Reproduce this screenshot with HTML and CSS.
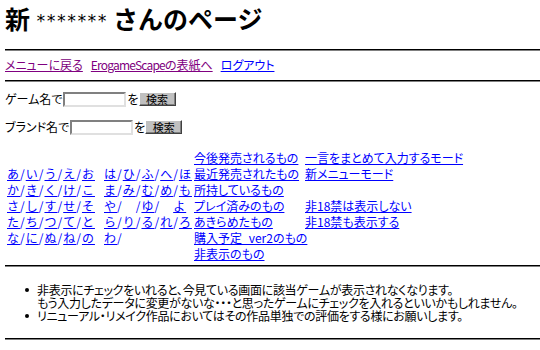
FILE: index.html
```html
<!DOCTYPE html>
<html lang="ja">
<head>
<meta charset="utf-8">
<title>新 ******* さんのページ</title>
<link rel="stylesheet" href="styles.css">
</head>
<body>
<h1 class="title">新 <span class="stars">*******</span> さんのページ</h1>
<hr class="rule rule-top">
<div class="nav">
  <a class="visited" href="#">メニューに戻る</a>
  <a class="visited" href="#"><span class="latin">ErogameScape</span>の表紙へ</a>
  <a href="#">ログアウト</a>
</div>
<hr class="rule rule-nav">
<form class="search">
  <div class="search-row">ゲーム名で<input class="field" type="text">を<button class="btn" type="button">検索</button></div>
  <div class="search-row">ブランド名で<input class="field" type="text">を<button class="btn" type="button">検索</button></div>
</form>
<div class="menu">
  <div class="kana">
    <div><a href="#">あ</a>/<a href="#">い</a>/<a href="#">う</a>/<a href="#">え</a>/<a href="#">お</a></div>
    <div><a href="#">か</a>/<a href="#">き</a>/<a href="#">く</a>/<a href="#">け</a>/<a href="#">こ</a></div>
    <div><a href="#">さ</a>/<a href="#">し</a>/<a href="#">す</a>/<a href="#">せ</a>/<a href="#">そ</a></div>
    <div><a href="#">た</a>/<a href="#">ち</a>/<a href="#">つ</a>/<a href="#">て</a>/<a href="#">と</a></div>
    <div><a href="#">な</a>/<a href="#">に</a>/<a href="#">ぬ</a>/<a href="#">ね</a>/<a href="#">の</a></div>
  </div>
  <div class="kana">
    <div><a href="#">は</a>/<a href="#">ひ</a>/<a href="#">ふ</a>/<a href="#">へ</a>/<a href="#">ほ</a></div>
    <div><a href="#">ま</a>/<a href="#">み</a>/<a href="#">む</a>/<a href="#">め</a>/<a href="#">も</a></div>
    <div><a href="#">や</a>/　/<a href="#">ゆ</a>/　<a href="#">よ</a></div>
    <div><a href="#">ら</a>/<a href="#">り</a>/<a href="#">る</a>/<a href="#">れ</a>/<a href="#">ろ</a></div>
    <div><a href="#">わ</a>/</div>
  </div>
  <div class="lists">
    <a href="#">今後発売されるもの</a>
    <a href="#">最近発売されたもの</a>
    <a href="#">所持しているもの</a>
    <a href="#">プレイ済みのもの</a>
    <a href="#">あきらめたもの</a>
    <a href="#">購入予定_ver2のもの</a>
    <a href="#">非表示のもの</a>
  </div>
  <div class="modes">
    <a href="#">一言をまとめて入力するモード</a>
    <a href="#">新メニューモード</a>
    <span class="blank"></span>
    <a href="#">非18禁は表示しない</a>
    <a href="#">非18禁も表示する</a>
  </div>
</div>
<hr class="rule rule-notes">
<ul class="notes">
  <li>非表示にチェックをいれると、今見ている画面に該当ゲームが表示されなくなります。<br>もう入力したデータに変更がないな・・・と思ったゲームにチェックを入れるといいかもしれません。</li>
  <li>リニューアル・リメイク作品においてはその作品単独での評価をする様にお願いします。</li>
</ul>
<hr class="rule rule-bottom">
</body>
</html>
```
FILE: styles.css
```css
html, body {
  background: #fff;
}
body {
  margin: 0;
  padding: 4px 0 0 5px;
  font-family: "Noto Sans CJK JP", sans-serif;
  font-size: 12px;
  line-height: 16px;
  color: #000;
  font-feature-settings: "palt";
}
a {
  color: #0000ff;
  text-decoration: underline;
}
a.visited {
  color: #800080;
}
.latin {
  letter-spacing: -0.8px;
}
.title {
  margin: 0;
  font-size: 25px;
  line-height: 28px;
  font-weight: bold;
  font-feature-settings: normal;
}
.stars {
  font-family: "DejaVu Sans Mono", monospace;
  font-weight: normal;
  font-size: 17px;
  vertical-align: 2px;
}
.rule {
  border: 0;
  border-top: 1px solid #000;
  border-bottom: 1px solid #808080;
  height: 0;
  margin: 0;
}
.rule-top { margin-top: 14px; }
.nav {
  margin: 6px 0;
  display: flex;
  gap: 8px;
}
.rule-nav { margin-top: 7px; }
.search {
  margin: 10px 0 0;
  display: flex;
  flex-direction: column;
  gap: 14px;
}
.search-row {
  display: flex;
  align-items: center;
  height: 14px;
}
.field {
  box-sizing: border-box;
  width: 63px;
  height: 15px;
  margin: 0 1px;
  padding: 0;
  border: 2px solid;
  border-color: #808080 #e0e0e0 #e0e0e0 #808080;
  background: #fff;
}
.btn {
  box-sizing: border-box;
  width: 37px;
  height: 14px;
  margin-left: 0;
  padding: 0;
  border: 1px solid;
  border-color: #fff #404040 #404040 #fff;
  box-shadow: inset -1px -1px 0 #808080;
  background: #c0c0c0;
  font: inherit;
  font-size: 11px;
  line-height: 12px;
  color: #000;
}
.menu {
  margin-top: 16px;
  padding-left: 2px;
  display: grid;
  grid-template-columns: 97px 90px 111px auto;
}
.kana {
  align-self: center;
  color: #0000ff;
  font-feature-settings: normal;
  letter-spacing: 1px;
  white-space: nowrap;
}
.lists, .modes {
  display: flex;
  flex-direction: column;
  align-items: flex-start;
  white-space: nowrap;
}
.blank {
  height: 16px;
}
.rule-notes { margin-top: 3px; }
.notes {
  margin: 16px 0 0;
  padding-left: 32px;
  line-height: 13px;
  letter-spacing: -0.3px;
  list-style: none;
}
.notes li {
  position: relative;
}
.notes li::before {
  content: "";
  position: absolute;
  left: -12px;
  top: 5px;
  width: 4px;
  height: 4px;
  border-radius: 50%;
  background: #000;
}
.rule-bottom { margin-top: 16px; }
```
